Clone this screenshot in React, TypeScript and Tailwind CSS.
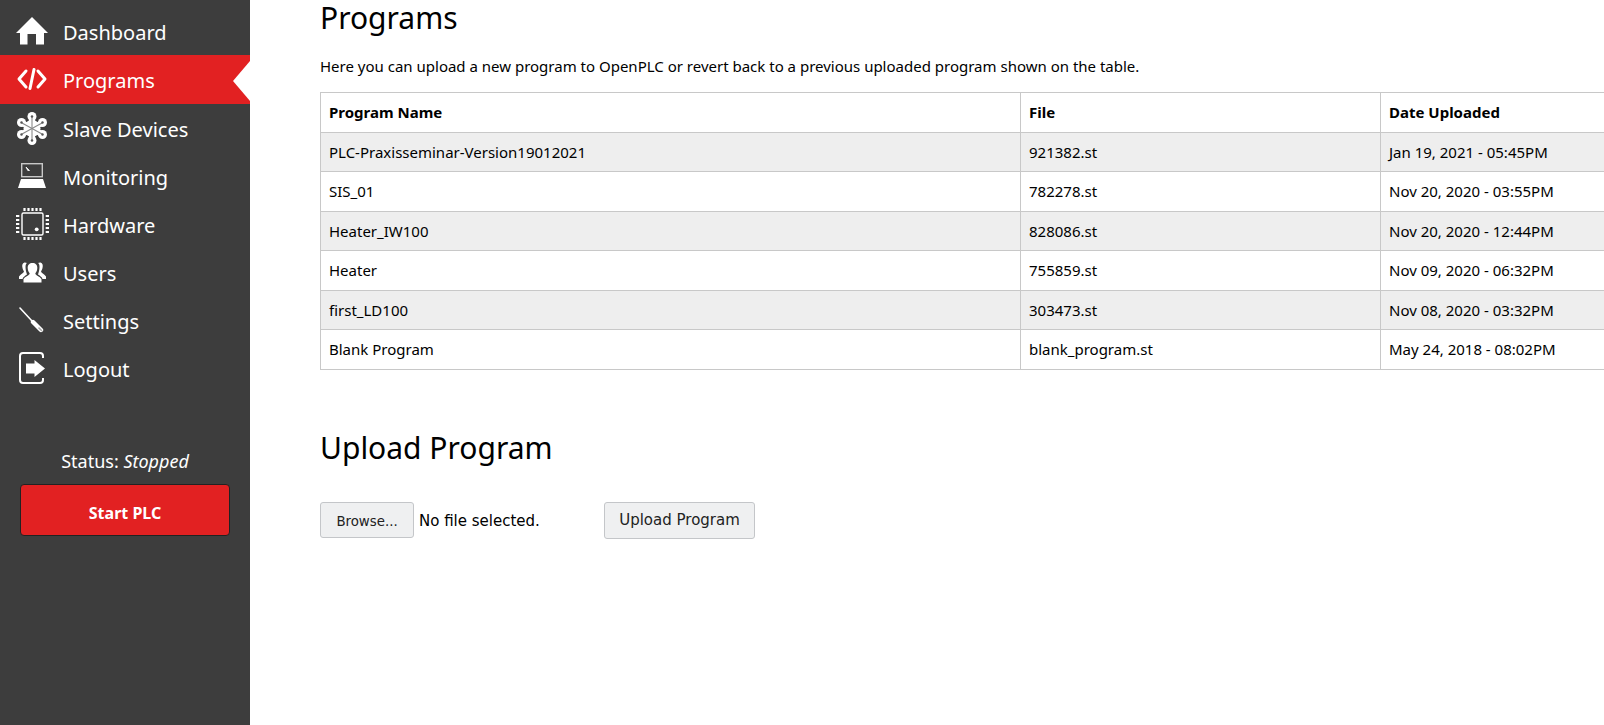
import type { ReactNode } from "react";

const font = "font-['Noto_Sans',sans-serif]";

function HomeIcon() {
  return (
    <svg className="mb-[2px]" width="32" height="28" viewBox="0 0 32 28" fill="#fff">
      <path d="M16 0 L32 16 H28 V27.5 H20 V17 H11.5 V27.5 H4 V16 H0 Z" />
    </svg>
  );
}

function CodeIcon() {
  return (
    <svg className="mb-[3px]" width="30" height="22" viewBox="0 0 30 22" fill="none" stroke="#fff" strokeWidth="3" strokeLinecap="round" strokeLinejoin="round">
      <path d="M9 3 L2 11 L9 19" />
      <path d="M21 3 L28 11 L21 19" />
      <path d="M17 1.5 L13 20.5" />
    </svg>
  );
}

function SlaveIcon() {
  return (
    <svg className="mb-[2px]" width="30" height="33" viewBox="0 0 30 33">
      <circle cx="15" cy="16.5" r="8.5" fill="#fff" />
      <g stroke="#fff" strokeWidth="6" fill="none">
        <path d="M15 5 V28" />
        <path d="M4.5 10.5 L25.5 22.5" />
        <path d="M25.5 10.5 L4.5 22.5" />
      </g>
      <g fill="#fff">
        <circle cx="15" cy="4.5" r="4.5" />
        <circle cx="15" cy="28.5" r="4.5" />
        <circle cx="4.5" cy="10.5" r="4.5" />
        <circle cx="25.5" cy="10.5" r="4.5" />
        <circle cx="4.5" cy="22.5" r="4.5" />
        <circle cx="25.5" cy="22.5" r="4.5" />
      </g>
      <g stroke="#8a8a8a" strokeWidth="1.1" fill="none">
        <path d="M15 5 V28" />
        <path d="M5 11 L25 22" />
        <path d="M25 11 L5 22" />
      </g>
      <g fill="#555">
        <circle cx="15" cy="4.5" r="1.2" />
        <circle cx="15" cy="28.5" r="1.2" />
        <circle cx="4.5" cy="10.5" r="1.2" />
        <circle cx="25.5" cy="10.5" r="1.2" />
        <circle cx="4.5" cy="22.5" r="1.2" />
        <circle cx="25.5" cy="22.5" r="1.2" />
      </g>
    </svg>
  );
}

function LaptopIcon() {
  return (
    <svg className="mb-[3px]" width="28" height="25" viewBox="0 0 28 25">
      <rect x="3.7" y="0.7" width="20.6" height="13" fill="none" stroke="#c8c8c8" strokeWidth="1.4" />
      <path d="M8 4 L11.5 7.5 L9.8 7.5 Z" fill="#fff" stroke="#fff" strokeWidth="0.8" />
      <path d="M3 16 H25 L28 25 H0 Z" fill="#fff" />
    </svg>
  );
}

function ChipIcon() {
  return (
    <svg className="mb-[2px]" width="33" height="32" viewBox="0 0 33 32" fill="none">
      <rect x="6" y="5" width="21" height="22" rx="1.5" stroke="#fff" strokeWidth="1.4" />
      <circle cx="20.7" cy="21.3" r="1.9" fill="#fff" />
      <g stroke="#fff" strokeWidth="2.2">
        <path d="M8.5 0 V3 M12.5 0 V3 M16.5 0 V3 M20.5 0 V3 M24.5 0 V3" />
        <path d="M8.5 29 V32 M12.5 29 V32 M16.5 29 V32 M20.5 29 V32 M24.5 29 V32" />
        <path d="M0 8 H3.3 M0 12 H3.3 M0 16 H3.3 M0 20 H3.3 M0 24 H3.3" />
        <path d="M29.7 8 H33 M29.7 12 H33 M29.7 16 H33 M29.7 20 H33 M29.7 24 H33" />
      </g>
    </svg>
  );
}

function UsersIcon() {
  return (
    <svg className="mb-[2px]" width="27" height="21" viewBox="0 0 27 21" fill="#fff">
      <path d="M5.5 0.5 C3.3 1 2.8 3.2 3.5 6 C3.8 7.5 4.5 8.5 5 9.5 C4.5 11 1.5 12.5 0 14.5 V17 H3.5 C4 15 6.5 13.5 8 12.5 C7.3 10 6.5 8 6.5 5 C6.5 3 7 1.5 8 1 C7.3 0.6 6.3 0.4 5.5 0.5 Z" />
      <path d="M21.5 0.5 C23.7 1 24.2 3.2 23.5 6 C23.2 7.5 22.5 8.5 22 9.5 C22.5 11 25.5 12.5 27 14.5 V17 H23.5 C23 15 20.5 13.5 19 12.5 C19.7 10 20.5 8 20.5 5 C20.5 3 20 1.5 19 1 C19.7 0.6 20.7 0.4 21.5 0.5 Z" />
      <path d="M13.5 1 C10.5 1 8.5 3 8.7 6 C8.8 8.5 9.7 10 10.7 11.5 C10.5 13.5 6 14.5 4.5 17 V20.5 H22.5 V17 C21 14.5 16.5 13.5 16.3 11.5 C17.3 10 18.2 8.5 18.3 6 C18.5 3 16.5 1 13.5 1 Z" />
    </svg>
  );
}

function ScrewdriverIcon() {
  return (
    <svg className="mb-[3px] mr-[2px]" width="25" height="26" viewBox="0 0 25 26" fill="none">
      <path d="M1 1 L13 14" stroke="#fff" strokeWidth="1.6" strokeLinecap="round" />
      <path d="M14 15 L22 23" stroke="#fff" strokeWidth="4.4" strokeLinecap="round" />
      <path d="M20 21 L22.5 23.5" stroke="#aaa" strokeWidth="1.6" strokeLinecap="round" />
    </svg>
  );
}

function LogoutIcon() {
  return (
    <svg className="mb-[3px] mr-[1px]" width="26" height="32" viewBox="0 0 26 32" fill="none">
      <path d="M24 6 V4 a3 3 0 0 0 -3 -3 H4 a3 3 0 0 0 -3 3 V28 a3 3 0 0 0 3 3 H21 a3 3 0 0 0 3 -3 V26" stroke="#fff" strokeWidth="2" />
      <path d="M7 11.5 H15.5 V8 L26 16.5 L15.5 25 V21.5 H7 Z" fill="#fff" />
    </svg>
  );
}

interface NavItemProps {
  icon: ReactNode;
  label: string;
  active?: boolean;
}

function NavItem({ icon, label, active }: NavItemProps) {
  return (
    <div className={`relative flex items-center pt-[4px] ${active ? "h-[49px] bg-[#e22122] pb-[1px]" : "h-[48px]"}`}>
      <div className="mt-[-2px] flex w-[63px] shrink-0 items-center justify-center pl-[1px]">{icon}</div>
      <span className="text-[20px] text-white">{label}</span>
      {active && (
        <div className="absolute right-0 top-[6px] h-0 w-0 border-y-[20px] border-r-[17px] border-y-transparent border-r-white" />
      )}
    </div>
  );
}

const rows = [
  ["PLC-Praxisseminar-Version19012021", "921382.st", "Jan 19, 2021 - 05:45PM"],
  ["SIS_01", "782278.st", "Nov 20, 2020 - 03:55PM"],
  ["Heater_IW100", "828086.st", "Nov 20, 2020 - 12:44PM"],
  ["Heater", "755859.st", "Nov 09, 2020 - 06:32PM"],
  ["first_LD100", "303473.st", "Nov 08, 2020 - 03:32PM"],
  ["Blank Program", "blank_program.st", "May 24, 2018 - 08:02PM"],
];

export default function App() {
  return (
    <div className={`flex h-[725px] w-[1604px] overflow-hidden bg-white ${font}`}>
      <aside className="flex w-[250px] shrink-0 flex-col bg-[#3d3d3d] pt-[7px]">
        <NavItem icon={<HomeIcon />} label="Dashboard" />
        <NavItem icon={<CodeIcon />} label="Programs" active />
        <NavItem icon={<SlaveIcon />} label="Slave Devices" />
        <NavItem icon={<LaptopIcon />} label="Monitoring" />
        <NavItem icon={<ChipIcon />} label="Hardware" />
        <NavItem icon={<UsersIcon />} label="Users" />
        <NavItem icon={<ScrewdriverIcon />} label="Settings" />
        <NavItem icon={<LogoutIcon />} label="Logout" />
        <div className="mt-[56px] text-center text-[18px] leading-[26px] text-white">
          Status: <i>Stopped</i>
        </div>
        <button className="ml-[20px] mt-[10px] h-[52px] w-[210px] rounded-[4px] border border-[#222] bg-[#e22122] pt-[6px] text-[16px] font-bold text-white">
          Start PLC
        </button>
      </aside>
      <main className="min-w-0 flex-1 pl-[70px] text-black">
        <h1 className="mt-[-1px] text-[30px] leading-[38px]">Programs</h1>
        <p className="mt-[19px] text-[15px] leading-[20px]">
          Here you can upload a new program to OpenPLC or revert back to a previous uploaded program shown on the table.
        </p>
        <table className="mt-[16px] w-[1400px] table-fixed border-collapse text-[15px]">
          <thead>
            <tr className="h-[39.5px]">
              <th className="w-[700px] border border-[#c8c8c8] px-2 text-left font-bold">Program Name</th>
              <th className="w-[360px] border border-[#c8c8c8] px-2 text-left font-bold">File</th>
              <th className="border border-[#c8c8c8] px-2 text-left font-bold">Date Uploaded</th>
            </tr>
          </thead>
          <tbody>
            {rows.map((row, i) => (
              <tr key={row[1]} className={`h-[39.5px] ${i % 2 === 0 ? "bg-[#eeeeee]" : ""}`}>
                {row.map((cell) => (
                  <td key={cell} className="border border-[#c8c8c8] px-2">
                    {cell}
                  </td>
                ))}
              </tr>
            ))}
          </tbody>
        </table>
        <h2 className="mt-[56px] text-[30px] leading-[44px]">Upload Program</h2>
        <div className="mt-[32px] flex items-center font-['DejaVu_Sans',sans-serif]">
          <button className="h-[36px] w-[94px] rounded-[3px] border border-[#c4c6c9] bg-[#eff0f1] pt-[3px] text-[13.33px] text-[#222]">
            Browse...
          </button>
          <span className="ml-[5px] w-[185px] pt-[2px] text-[15px]">No file selected.</span>
          <button className="h-[37px] w-[151px] rounded-[3px] border border-[#c4c6c9] bg-[#eff0f1] text-[15px] text-[#222]">
            Upload Program
          </button>
        </div>
      </main>
    </div>
  );
}
